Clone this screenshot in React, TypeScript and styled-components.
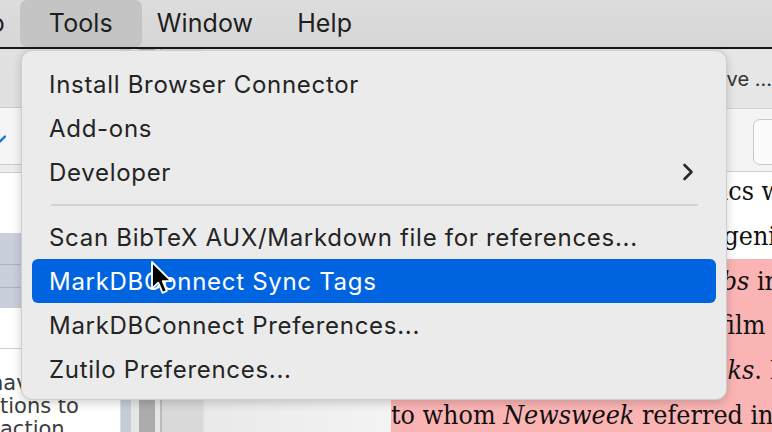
import React from 'react';
import styled, { createGlobalStyle } from 'styled-components';

const Global = createGlobalStyle`
  html, body { margin: 0; padding: 0; background: #fff; overflow: hidden; }
  #root { width: 772px; height: 432px; }
`;

const Screen = styled.div`
  position: relative;
  width: 772px;
  height: 432px;
  overflow: hidden;
  display: flex;
  flex-direction: column;
  font-family: Inter, "Liberation Sans", sans-serif;
`;

const MenuBar = styled.div`
  flex: none;
  height: 47px;
  display: flex;
  align-items: stretch;
  background: linear-gradient(#dddddd, #d6d6d6);
  border-bottom: 2px solid #181818;
  margin-left: -51px;
`;

const MenuTitle = styled.div<{ $active?: boolean }>`
  display: flex;
  align-items: center;
  padding: ${p => (p.$active ? '0 29px 1px' : '0 22px 1px')};
  margin: ${p => (p.$active ? '0 -7px' : '0')};
  border-radius: 7px;
  background: ${p => (p.$active ? '#c4c4c4' : 'transparent')};
  font-size: 25px;
  color: #1e1e1e;
  letter-spacing: 0.1px;
`;

const Window = styled.div`
  flex: 1;
  display: grid;
  grid-template-columns: 120px 85px 1fr;
  min-height: 0;
`;

const LeftPane = styled.div`
  display: flex;
  flex-direction: column;
  overflow: hidden;
  background: #fff;
`;

const Band = styled.div<{ $h: number; $bg: string; $line?: string }>`
  flex: none;
  height: ${p => p.$h}px;
  background: ${p => p.$bg};
  border-bottom: 1px solid ${p => p.$line || 'transparent'};
  display: flex;
  align-items: center;
`;

const Chevron = styled.svg`
  margin-left: -6px;
  margin-top: 6px;
`;

const AbstractText = styled.div`
  padding-top: 23px;
  font-family: "DejaVu Sans", sans-serif;
  font-size: 21px;
  line-height: 23px;
  color: #3c3c3c;
  white-space: nowrap;
`;

const TextLine = styled.div<{ $shift: number }>`
  margin-left: ${p => p.$shift}px;
`;

const Splitter = styled.div`
  display: flex;
  align-items: stretch;
`;

const Bar = styled.div<{ $w: number; $bg: string }>`
  flex: none;
  width: ${p => p.$w}px;
  background: ${p => p.$bg};
`;

const Reader = styled.div`
  display: flex;
  flex-direction: column;
  overflow: hidden;
  min-width: 0;
`;

const TabBar = styled.div`
  flex: none;
  height: 58px;
  background: #e6e6e6;
  border-bottom: 1px solid #cfcfcf;
  display: flex;
  align-items: center;
  justify-content: flex-end;
  font-size: 20px;
  color: #333;
  white-space: nowrap;
  padding-top: 1px;
`;

const ToolBar = styled.div`
  flex: none;
  height: 63px;
  background: #f3f3f3;
  border-bottom: 1px solid #cfcfcf;
  display: flex;
  align-items: center;
  justify-content: flex-end;
  padding-top: 8px;
  box-sizing: border-box;
`;

const ToolButton = styled.div`
  width: 60px;
  height: 46px;
  margin-right: -41px;
  background: #fbfbfb;
  border: 1px solid #c8c8c8;
  border-radius: 7px;
  box-sizing: border-box;
  align-self: flex-start;
  margin-top: 2px;
`;

const Doc = styled.div`
  flex: 1;
  display: flex;
  background: linear-gradient(to right, #e9e9e9, #f4f4f4 186px, #fff 186px);
  overflow: hidden;
`;

const Page = styled.div`
  margin-left: 186px;
  flex: 1;
  min-width: 0;
  margin-top: -3px;
  font-family: "DejaVu Serif", serif;
  font-stretch: condensed;
  font-size: 26.6px;
  line-height: 44.8px;
  color: #111;
`;

const Line = styled.div<{ $cut: number; $left?: boolean }>`
  display: flex;
  justify-content: ${p => (p.$left ? 'flex-start' : 'flex-end')};
  white-space: pre;
  margin-right: ${p => -p.$cut}px;
  height: 44.8px;
`;

const Mark = styled.span<{ $pt: number; $pb: number; $on?: boolean }>`
  background: ${p => (p.$on ? '#fbb4b4' : 'transparent')};
  padding: ${p => p.$pt}px 0 ${p => p.$pb}px;
`;

const Dropdown = styled.div`
  position: absolute;
  left: 21px;
  top: 50px;
  width: 706px;
  height: 350px;
  box-sizing: border-box;
  padding: 11px 10px 10px;
  background: #ebebeb;
  border-radius: 11px;
  border: 1px solid rgba(0, 0, 0, 0.12);
  box-shadow: 0 3px 10px rgba(0, 0, 0, 0.18);
  display: flex;
  flex-direction: column;
`;

const Item = styled.div<{ $hot?: boolean }>`
  flex: none;
  height: 44px;
  display: flex;
  align-items: center;
  justify-content: space-between;
  padding: 0 22px 0 17px;
  border-radius: 6px;
  font-size: 24px;
  letter-spacing: 0.7px;
  color: ${p => (p.$hot ? '#fff' : '#242424')};
  background: ${p => (p.$hot ? '#0064e1' : 'transparent')};
`;

const Separator = styled.div`
  flex: none;
  height: 21px;
  display: flex;
  align-items: center;
  padding: 0 18px 0 19px;
  &::after {
    content: '';
    flex: 1;
    height: 2px;
    background: #d3d3d3;
  }
`;

const Cursor = styled.svg`
  position: absolute;
  left: 150px;
  top: 260px;
`;

const menuItems: { label: string; sub?: boolean; hot?: boolean; sep?: boolean }[] = [
  { label: 'Install Browser Connector' },
  { label: 'Add-ons' },
  { label: 'Developer', sub: true },
  { label: '', sep: true },
  { label: 'Scan BibTeX AUX/Markdown file for references...' },
  { label: 'MarkDBConnect Sync Tags', hot: true },
  { label: 'MarkDBConnect Preferences...' },
  { label: 'Zutilo Preferences...' },
];

export default function App() {
  return (
    <Screen>
      <Global />
      <MenuBar>
        <MenuTitle>Go</MenuTitle>
        <MenuTitle $active>Tools</MenuTitle>
        <MenuTitle>Window</MenuTitle>
        <MenuTitle>Help</MenuTitle>
      </MenuBar>
      <Window>
        <LeftPane>
          <Band $h={58} $bg="#e1e1e1" $line="#cbcbcb" />
          <Band $h={56} $bg="#f5f5f5" $line="#cccccc">
            <Chevron width="12" height="8" viewBox="0 0 12 8">
              <path d="M1 1.5 L6 6.5 L11 1.5" fill="none" stroke="#1f6fe0" strokeWidth="2.4" strokeLinecap="round" strokeLinejoin="round" />
            </Chevron>
          </Band>
          <Band $h={7} $bg="#ededed" $line="#cccccc" />
          <Band $h={59} $bg="#ffffff" />
          <Band $h={31} $bg="#c9cfdb" $line="#aab3c2" />
          <Band $h={22} $bg="#c9cfdb" $line="#aab3c2" />
          <Band $h={19} $bg="#c9cfdb" />
          <Band $h={40} $bg="#ffffff" $line="#cfcfcf" />
          <AbstractText>
            <TextLine $shift={-10}>navigated the</TextLine>
            <TextLine $shift={0}>tions to</TextLine>
            <TextLine $shift={0}>action</TextLine>
          </AbstractText>
        </LeftPane>
        <Splitter>
          <Bar $w={1} $bg="#dcdcdc" />
          <Bar $w={10} $bg="#c4ccd8" />
          <Bar $w={8} $bg="#e6e6e6" />
          <Bar $w={16} $bg="#acacac" />
          <Bar $w={5} $bg="#e6e6e6" />
          <Bar $w={2} $bg="#bcbcbc" />
          <Bar $w={41} $bg="#d9d9d9" />
          <Bar $w={2} $bg="#e4e4e4" />
        </Splitter>
        <Reader>
          <TabBar>Heroes and Villains of the Archive …</TabBar>
          <ToolBar>
            <ToolButton />
          </ToolBar>
          <Doc>
            <Page>
              <Line $cut={10}>
                <Mark $pt={0} $pb={0}>narrative of racial politics w</Mark>
              </Line>
              <Line $cut={4}>
                <Mark $pt={0} $pb={0}>the film’s overtly eugeni</Mark>
              </Line>
              <Line $cut={8}>
                <Mark $on $pt={0} $pb={7}>
                  and the <i>Boys Clubs</i> in
                </Mark>
              </Line>
              <Line $cut={1}>
                <Mark $on $pt={0} $pb={1}>adapted into the film </Mark>
              </Line>
              <Line $cut={14}>
                <Mark $on $pt={0} $pb={1}>
                  <i>Tarzan Books</i>. F
                </Mark>
              </Line>
              <Line $cut={0} $left>
                <Mark $on $pt={0} $pb={10}>
                  to whom <i>Newsweek</i> referred in its review
                </Mark>
              </Line>
            </Page>
          </Doc>
        </Reader>
      </Window>
      <Dropdown>
        {menuItems.map((m, i) =>
          m.sep ? (
            <Separator key={i} />
          ) : (
            <Item key={i} $hot={m.hot}>
              <span>{m.label}</span>
              {m.sub && (
                <svg width="12" height="18" viewBox="0 0 12 18">
                  <path d="M2.5 2 L9.5 9 L2.5 16" fill="none" stroke="#2a2a2a" strokeWidth="2.6" strokeLinecap="round" strokeLinejoin="round" />
                </svg>
              )}
            </Item>
          )
        )}
      </Dropdown>
      <Cursor width="24" height="36" viewBox="0 0 18 27">
        <path d="M1.5 1.5 L1.5 21.5 L6.2 17 L9.4 24.6 L12.6 23.2 L9.5 15.8 L16 15.8 Z" fill="#000" stroke="#fff" strokeWidth="1.4" strokeLinejoin="round" />
      </Cursor>
    </Screen>
  );
}
